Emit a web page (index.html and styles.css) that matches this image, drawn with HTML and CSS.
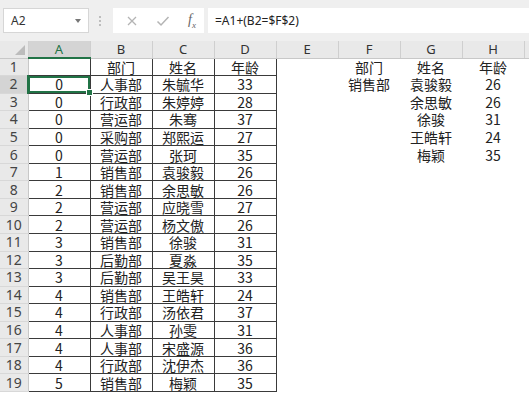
FILE: index.html
```html
<!DOCTYPE html>
<html lang="zh-CN">
<head>
    <meta charset="UTF-8">
    <title>工作表</title>
    <link rel="stylesheet" href="styles.css">
</head>
<body>
    <div class="toolbar">
        <div class="name-box">
            <span>A2</span>
            <span class="caret"></span>
        </div>
        <div class="grip"><i></i><i></i><i></i></div>
        <div class="fx-box">
            <svg class="ico" width="12" height="12" viewBox="0 0 12 12"><path d="M2 2 L10 10 M10 2 L2 10" stroke="#b4b4b4" stroke-width="1.3" fill="none"/></svg>
            <svg class="ico" width="14" height="12" viewBox="0 0 14 12"><path d="M1.5 6.5 L5 10 L12.5 2" stroke="#b4b4b4" stroke-width="1.5" fill="none"/></svg>
            <span class="fx">f<sub>x</sub></span>
        </div>
        <div class="formula">=A1+(B2=$F$2)</div>
    </div>

    <div class="sheet">
        <table class="grid">
            <colgroup>
                <col class="c-head">
                <col><col><col><col><col><col><col><col><col>
            </colgroup>
            <thead>
                <tr>
                    <th class="corner"><span class="tri"></span></th>
                    <th class="sel">A</th><th>B</th><th>C</th><th>D</th><th>E</th><th>F</th><th>G</th><th>H</th><th></th>
                </tr>
            </thead>
            <tbody>
                <tr><th>1</th><td class="t"></td><td class="t">部门</td><td class="t">姓名</td><td class="t">年龄</td><td></td><td>部门</td><td>姓名</td><td>年龄</td><td></td></tr>
                <tr><th class="sel-row">2</th><td class="t active">0<span class="handle"></span></td><td class="t">人事部</td><td class="t">朱毓华</td><td class="t">33</td><td></td><td>销售部</td><td>袁骏毅</td><td>26</td><td></td></tr>
                <tr><th>3</th><td class="t">0</td><td class="t">行政部</td><td class="t">朱婷婷</td><td class="t">28</td><td></td><td></td><td>余思敏</td><td>26</td><td></td></tr>
                <tr><th>4</th><td class="t">0</td><td class="t">营运部</td><td class="t">朱骞</td><td class="t">37</td><td></td><td></td><td>徐骏</td><td>31</td><td></td></tr>
                <tr><th>5</th><td class="t">0</td><td class="t">采购部</td><td class="t">郑熙运</td><td class="t">27</td><td></td><td></td><td>王皓轩</td><td>24</td><td></td></tr>
                <tr><th>6</th><td class="t">0</td><td class="t">营运部</td><td class="t">张珂</td><td class="t">35</td><td></td><td></td><td>梅颖</td><td>35</td><td></td></tr>
                <tr><th>7</th><td class="t">1</td><td class="t">销售部</td><td class="t">袁骏毅</td><td class="t">26</td><td></td><td></td><td></td><td></td><td></td></tr>
                <tr><th>8</th><td class="t">2</td><td class="t">销售部</td><td class="t">余思敏</td><td class="t">26</td><td></td><td></td><td></td><td></td><td></td></tr>
                <tr><th>9</th><td class="t">2</td><td class="t">营运部</td><td class="t">应晓雪</td><td class="t">27</td><td></td><td></td><td></td><td></td><td></td></tr>
                <tr><th>10</th><td class="t">2</td><td class="t">营运部</td><td class="t">杨文傲</td><td class="t">26</td><td></td><td></td><td></td><td></td><td></td></tr>
                <tr><th>11</th><td class="t">3</td><td class="t">销售部</td><td class="t">徐骏</td><td class="t">31</td><td></td><td></td><td></td><td></td><td></td></tr>
                <tr><th>12</th><td class="t">3</td><td class="t">后勤部</td><td class="t">夏淼</td><td class="t">35</td><td></td><td></td><td></td><td></td><td></td></tr>
                <tr><th>13</th><td class="t">3</td><td class="t">后勤部</td><td class="t">吴王昊</td><td class="t">33</td><td></td><td></td><td></td><td></td><td></td></tr>
                <tr><th>14</th><td class="t">4</td><td class="t">销售部</td><td class="t">王皓轩</td><td class="t">24</td><td></td><td></td><td></td><td></td><td></td></tr>
                <tr><th>15</th><td class="t">4</td><td class="t">行政部</td><td class="t">汤依君</td><td class="t">37</td><td></td><td></td><td></td><td></td><td></td></tr>
                <tr><th>16</th><td class="t">4</td><td class="t">人事部</td><td class="t">孙雯</td><td class="t">31</td><td></td><td></td><td></td><td></td><td></td></tr>
                <tr><th>17</th><td class="t">4</td><td class="t">人事部</td><td class="t">宋盛源</td><td class="t">36</td><td></td><td></td><td></td><td></td><td></td></tr>
                <tr><th>18</th><td class="t">4</td><td class="t">行政部</td><td class="t">沈伊杰</td><td class="t">36</td><td></td><td></td><td></td><td></td><td></td></tr>
                <tr><th>19</th><td class="t">5</td><td class="t">销售部</td><td class="t">梅颖</td><td class="t">35</td><td></td><td></td><td></td><td></td><td></td></tr>
            </tbody>
        </table>
    </div>
</body>
</html>
```

FILE: styles.css
```css
/* base */
body {
    margin: 0;
    padding: 0;
    background: #fff;
    font-family: "Noto Sans CJK SC", "Noto Sans", sans-serif;
    overflow: hidden;
}

/* barra de fórmulas */
.toolbar {
    display: flex;
    align-items: center;
    height: 41px;
    padding-left: 3px;
    background: #efefef;
    box-sizing: border-box;
}
.name-box {
    display: flex;
    align-items: center;
    justify-content: space-between;
    width: 86px;
    height: 25px;
    padding: 0 7px 0 7px;
    box-sizing: border-box;
    background: #fff;
    border: 1px solid #d6d6d6;
    font-family: "Noto Sans", sans-serif;
    font-size: 12px;
    color: #333;
}
.caret {
    width: 0;
    height: 0;
    border-left: 3px solid transparent;
    border-right: 3px solid transparent;
    border-top: 4px solid #777;
}
.grip {
    display: flex;
    flex-direction: column;
    gap: 2px;
    margin: 0 12px 0 10px;
}
.grip i {
    display: block;
    width: 2px;
    height: 2px;
    background: #bdbdbd;
}
.fx-box {
    display: flex;
    align-items: center;
    width: 91px;
    height: 25px;
    padding-left: 13px;
    gap: 18px;
    box-sizing: border-box;
    background: #fff;
}
.fx {
    font-family: "Liberation Serif", serif;
    font-style: italic;
    font-size: 14px;
    color: #666;
}
.fx sub {
    font-size: 9px;
}
.formula {
    flex: 1;
    height: 25px;
    margin-left: 4px;
    padding-left: 7px;
    line-height: 25px;
    background: #fff;
    font-family: "Noto Sans", sans-serif;
    font-size: 12px;
    color: #222;
}

/* hoja */
.sheet {
    overflow: hidden;
    width: 529px;
}
.grid {
    border-collapse: collapse;
    table-layout: fixed;
    width: 586px;
    font-size: 14px;
    color: #222;
}
.grid col {
    width: 62px;
}
.grid col.c-head {
    width: 28px;
}
.grid thead tr {
    height: 17px;
}
.grid tbody tr {
    height: 17.55px;
}
.grid thead th {
    padding: 0;
    background: #e9e9e9;
    border-right: 1px solid #cfcfcf;
    border-bottom: 1px solid #c8c8c8;
    font-family: "Noto Sans", sans-serif;
    font-weight: normal;
    font-size: 13px;
    line-height: 14px;
    color: #333;
}
.grid thead th.sel {
    background: #d4d4d4;
    color: #217346;
    border-bottom: 2px solid #217346;
}
.corner {
    position: relative;
}
.tri {
    position: absolute;
    right: 3px;
    bottom: 3px;
    width: 0;
    height: 0;
    border-left: 10px solid transparent;
    border-bottom: 10px solid #bcbcbc;
}
.grid tbody th {
    padding: 0;
    background: #e9e9e9;
    border-right: 1px solid #c8c8c8;
    border-bottom: 1px solid #d8d8d8;
    font-family: "Noto Sans", sans-serif;
    font-weight: normal;
    font-size: 14px;
    line-height: 14px;
    color: #444;
}
.grid tbody th.sel-row {
    background: #d4d4d4;
    border-right: 2px solid #217346;
}
.grid td {
    padding: 0;
    text-align: center;
    line-height: 14px;
    white-space: nowrap;
}
.grid td.t {
    border: 1px solid #3a3a3a;
}
.grid td.active {
    position: relative;
    outline: 2px solid #217346;
    outline-offset: -2px;
}
.handle {
    position: absolute;
    right: -3px;
    bottom: -3px;
    width: 5px;
    height: 5px;
    background: #217346;
    border: 1px solid #fff;
    z-index: 2;
}
```
